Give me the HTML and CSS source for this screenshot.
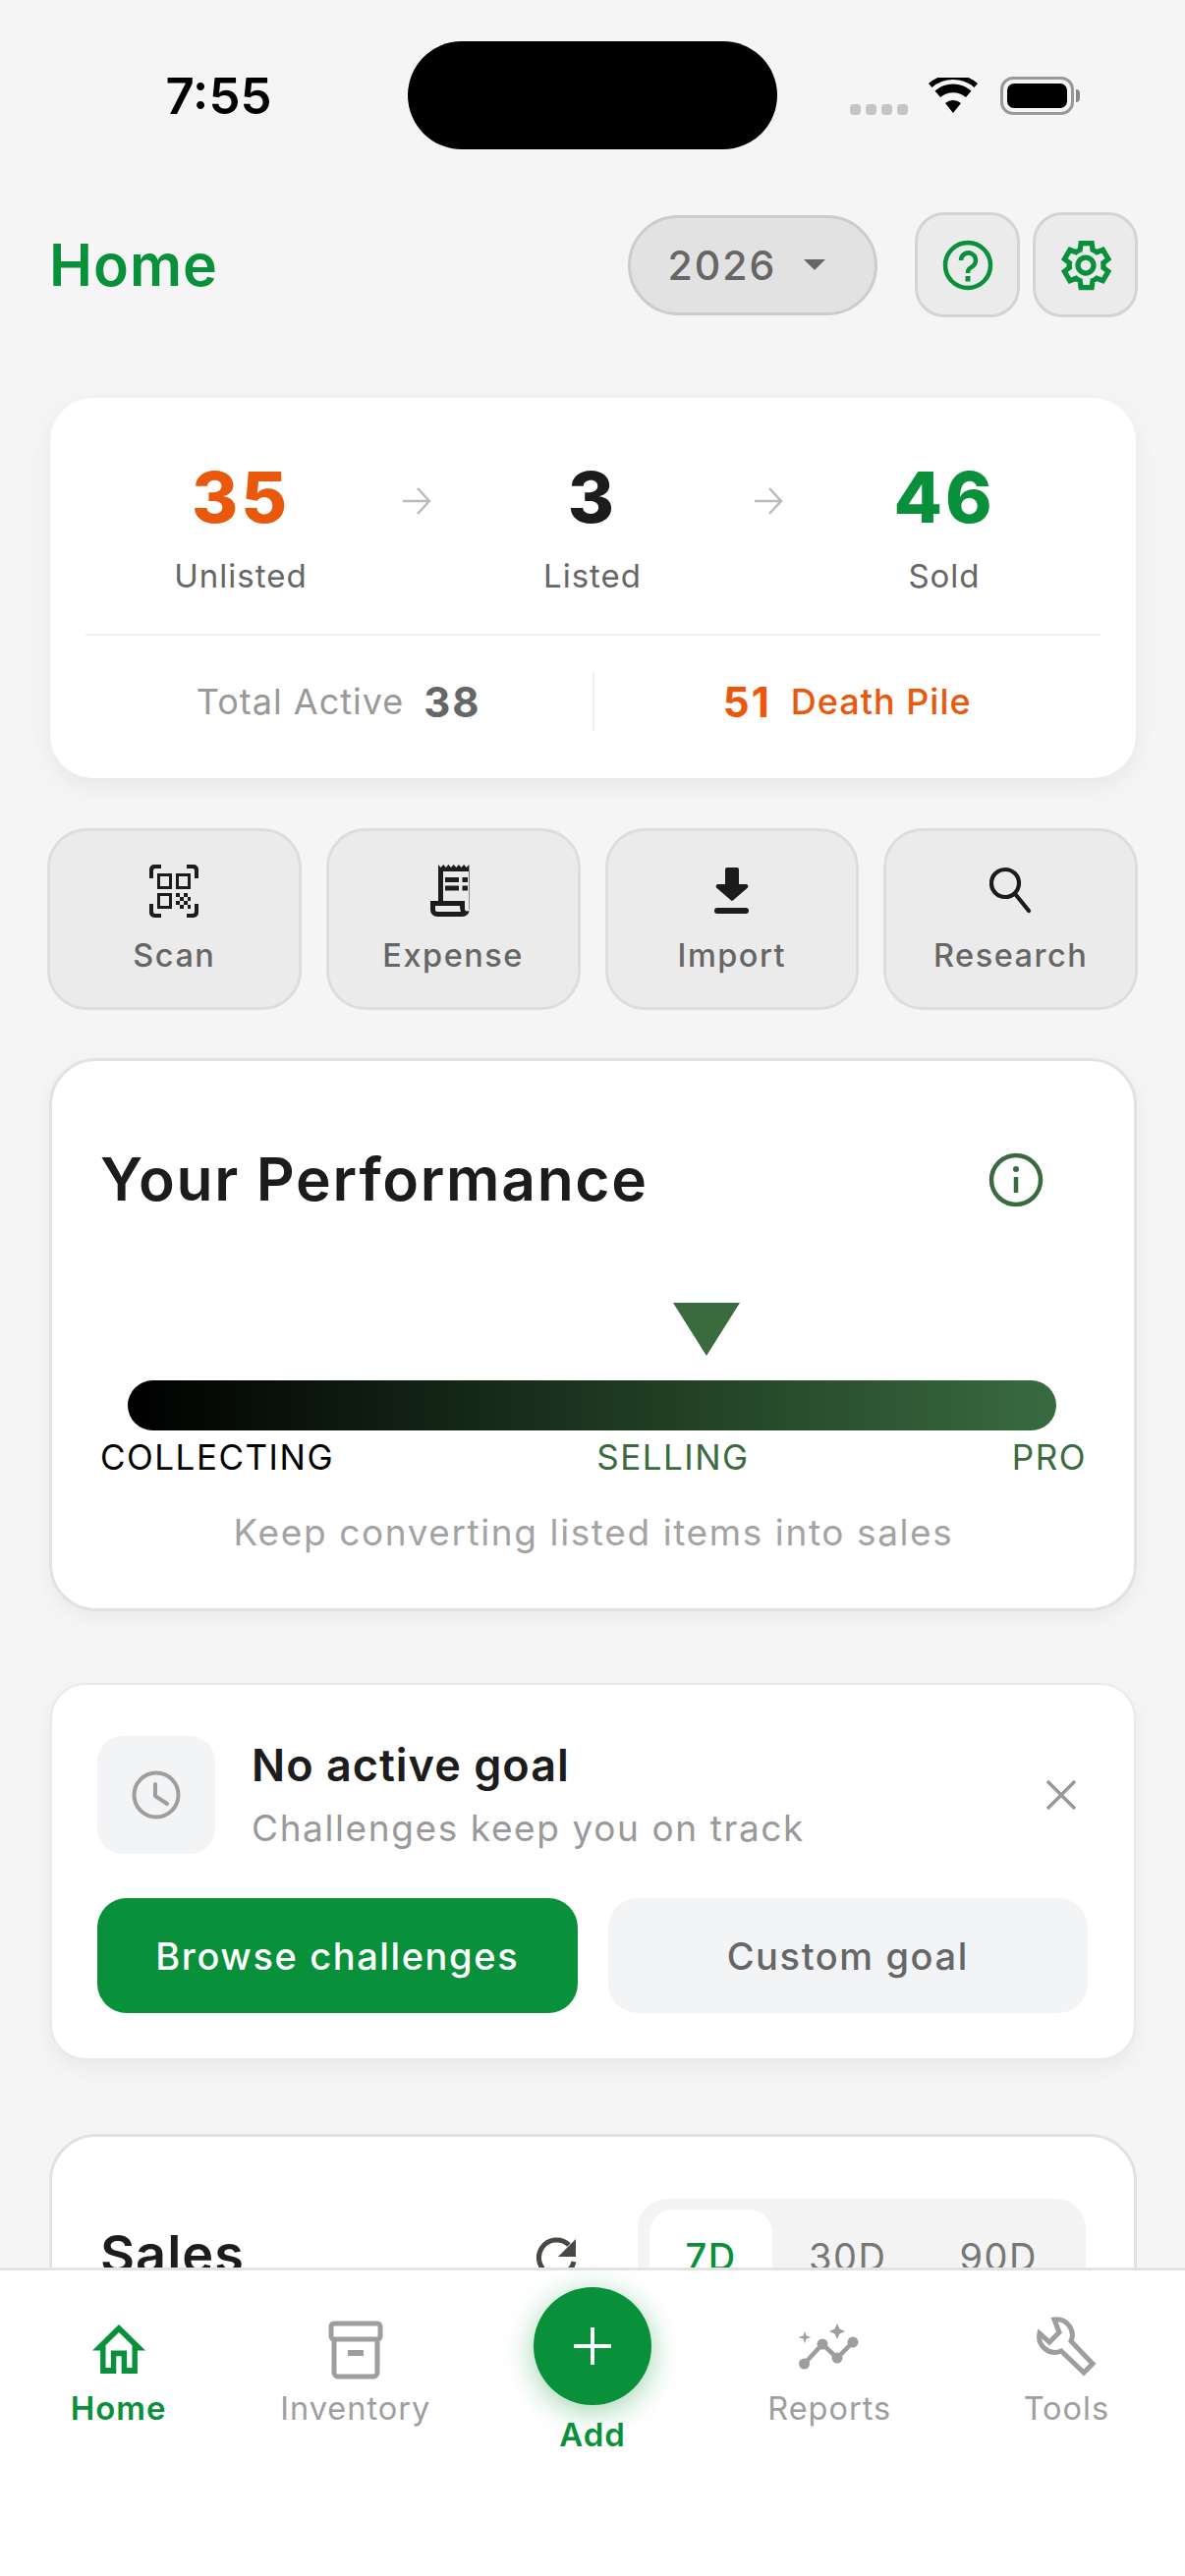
FILE: index.html
```html
<!DOCTYPE html>
<html lang="en">
<head>
    <meta charset="UTF-8">
    <meta name="viewport" content="width=device-width, initial-scale=1.0">
    <title>Home</title>
    <link rel="stylesheet" href="styles.css">
</head>
<body>
    <div class="app">
        <div class="content">
            <div class="status-bar">
                <div class="time">7:55</div>
                <div class="island"></div>
                <div class="status-icons">
                    <div class="signal"><span></span><span></span><span></span><span></span></div>
                    <svg class="wifi" viewBox="0 0 50 36"><path d="M25 36 17 26a12 12 0 0 1 16 0zM12 20 6.500 13.500a28 28 0 0 1 37 0L38 20a20 20 0 0 0-26 0zM3.500 10 0 6a38 38 0 0 1 50 0l-3.500 4a33 33 0 0 0-43 0z" fill="#000"/></svg>
                    <div class="battery"><div class="battery-fill"></div></div>
                    <div class="battery-cap"></div>
                </div>
            </div>

            <div class="header">
                <h1>Home</h1>
                <div class="year-pill">2026 <span class="caret"></span></div>
                <div class="square-btn">
                    <svg width="52" height="52" viewBox="0 0 52 52" fill="none" stroke="#09903a"><circle cx="26" cy="26" r="23" stroke-width="4.500"/><path d="M19 21a7.500 7.500 0 1 1 11.500 6.300c-3 1.900-4.500 3-4.500 6.700" stroke-width="4.500"/><rect x="23.500" y="37" width="5" height="5.500" fill="#09903a" stroke="none"/></svg>
                </div>
                <div class="square-btn">
                    <svg width="60" height="60" viewBox="0 0 24 24" fill="none" stroke="#09903a" stroke-width="2.100"><path d="M19.140 12.940c.04-.3.060-.61.060-.94 0-.32-.02-.64-.07-.94l2.030-1.580-2.200-3.800-2.500 1c-.5-.38-1.030-.7-1.620-.94L14.460 3h-4.400l-.38 2.740c-.59.24-1.130.57-1.620.94l-2.500-1-2.200 3.800 2.030 1.580c-.05.3-.09.63-.09.94s.02.64.07.94l-2.030 1.580 2.200 3.800 2.500-1c.5.38 1.030.7 1.620.94l.38 2.740h4.400l.38-2.740c.59-.24 1.130-.56 1.620-.94l2.500 1 2.200-3.800z"/><circle cx="12" cy="12" r="3.200"/></svg>
                </div>
            </div>

            <div class="stats-card">
                <div class="flow-row">
                    <div class="flow-item"><div class="flow-num orange">35</div><div class="flow-label">Unlisted</div></div>
                    <svg class="flow-arrow" viewBox="0 0 30 30" fill="none" stroke="#bbb" stroke-width="2.500"><path d="M1 15h27M16 2l12 13-12 13"/></svg>
                    <div class="flow-item"><div class="flow-num">3</div><div class="flow-label">Listed</div></div>
                    <svg class="flow-arrow" viewBox="0 0 30 30" fill="none" stroke="#bbb" stroke-width="2.500"><path d="M1 15h27M16 2l12 13-12 13"/></svg>
                    <div class="flow-item"><div class="flow-num green">46</div><div class="flow-label">Sold</div></div>
                </div>
                <div class="totals-row">
                    <div class="total"><span class="total-label">Total Active</span><span class="total-num">38</span></div>
                    <div class="total total-right"><span class="total-num orange">51</span><span class="total-label orange">Death Pile</span></div>
                </div>
            </div>

            <div class="actions">
                <div class="action">
                    <svg width="50" height="54" viewBox="0 0 50 54" fill="#1c1c1c"><path d="M0 14V5a5 5 0 0 1 5-5h7v4H6a2 2 0 0 0-2 2v8zM38 0h7a5 5 0 0 1 5 5v9h-4V6a2 2 0 0 0-2-2h-6zM0 40h4v8a2 2 0 0 0 2 2h6v4H5a5 5 0 0 1-5-5zM46 40h4v9a5 5 0 0 1-5 5h-7v-4h6a2 2 0 0 0 2-2z"/><path d="M8 9h15v16H8zM11 12v10h9V12zM27 9h15v16H27zM30 12v10h9V12zM8 29h15v16H8zM11 32v10h9V32z" fill-rule="evenodd"/><path d="M27 29h4v4h-4zM35 29h4v4h-4zM31 33h4v4h-4zM39 33h3v4h-3zM27 37h4v4h-4zM35 37h4v4h-4zM31 41h4v4h-4zM39 41h3v4h-3z"/></svg>
                    <span>Scan</span>
                </div>
                <div class="action">
                    <svg width="46" height="54" viewBox="0 0 46 54"><path d="M8 0l2.600 3 2.600-3 2.600 3 2.600-3 2.600 3 2.700-3 2.600 3 2.600-3 2.600 3 2.600-3 2.600 3 2.700-3 .2 46a7 7 0 0 1-7 7H7a7 7 0 0 1-7-7v-9h8zM13 7v30h22v8a2.500 2.500 0 0 0 5 0V7zM5 42v4a2 2 0 0 0 2 2h24a16 16 0 0 1-1-6z" fill="#1c1c1c" fill-rule="evenodd"/><path d="M15 13h14v5H15zM32.500 13H38v5h-5.500zM15 21.500h14v5H15zM32.500 21.500H38v5h-5.500z" fill="#1c1c1c"/></svg>
                    <span>Expense</span>
                </div>
                <div class="action">
                    <svg width="36" height="48" viewBox="0 0 36 48" fill="#1c1c1c"><path d="M11 2a2 2 0 0 1 2-2h10a2 2 0 0 1 2 2v15h7c2 0 3 2 2 3.500L19.500 33a2 2 0 0 1-3 0L2 20.500C1 19 2 17 4 17h7z"/><rect x="0" y="41" width="35" height="6" rx="3"/></svg>
                    <span>Import</span>
                </div>
                <div class="action">
                    <svg width="44" height="48" viewBox="0 0 44 48" fill="none" stroke="#1c1c1c" stroke-width="4.200"><circle cx="16" cy="16" r="14"/><path d="M27 28l13 16" stroke-linecap="round"/></svg>
                    <span>Research</span>
                </div>
            </div>

            <div class="perf-card">
                <div class="perf-head">
                    <h2>Your Performance</h2>
                    <svg width="56" height="56" viewBox="0 0 56 56" fill="none" stroke="#396b3f" stroke-width="4.500"><circle cx="28" cy="28" r="25"/><path d="M28 25v16"/><circle cx="28" cy="17" r="3" fill="#396b3f" stroke="none"/></svg>
                </div>
                <div class="marker"></div>
                <div class="level-bar"></div>
                <div class="level-labels">
                    <span class="level-black">COLLECTING</span>
                    <span>SELLING</span>
                    <span>PRO</span>
                </div>
                <div class="perf-hint">Keep converting listed items into sales</div>
            </div>

            <div class="goal-card">
                <div class="goal-top">
                    <div class="goal-icon">
                        <svg width="50" height="50" viewBox="0 0 50 50" fill="none" stroke="#9e9e9e" stroke-width="4"><circle cx="25" cy="25" r="22.500"/><path d="M24 14v12l12 8" stroke-linecap="round" stroke-linejoin="round"/></svg>
                    </div>
                    <div class="goal-text">
                        <div class="goal-title">No active goal</div>
                        <div class="goal-sub">Challenges keep you on track</div>
                    </div>
                    <svg class="goal-close" width="32" height="32" viewBox="0 0 32 32" stroke="#999" stroke-width="3.500"><path d="M2 2l28 28M30 2 2 30"/></svg>
                </div>
                <div class="goal-btns">
                    <div class="goal-btn primary">Browse challenges</div>
                    <div class="goal-btn">Custom goal</div>
                </div>
            </div>

            <div class="sales-card">
                <div class="sales-head">
                    <h2>Sales</h2>
                    <svg class="refresh" width="44" height="44" viewBox="0 0 44 44" fill="none"><path d="M34 8A18 18 0 1 0 39 25" stroke="#454a42" stroke-width="5"/><path d="M41 2v18H23z" fill="#454a42"/></svg>
                    <div class="range">
                        <div class="range-tab active">7D</div>
                        <div class="range-tab">30D</div>
                        <div class="range-tab">90D</div>
                    </div>
                </div>
            </div>
        </div>

        <div class="nav">
            <div class="nav-item active">
                <svg class="icon-home" width="54" height="50" viewBox="2 3 20 17" preserveAspectRatio="none" fill="#09903a"><path d="M12 5.690l5 4.500V18h-2v-6H9v6H7v-7.810l5-4.500M12 3L2 12h3v8h6v-6h2v6h6v-8h3L12 3z"/></svg>
                <span>Home</span>
            </div>
            <div class="nav-item">
                <svg class="icon-inventory" width="56" height="60" viewBox="0 0 56 60" fill="none" stroke="#9e9e9e" stroke-width="5"><rect x="3" y="3" width="50" height="16" rx="3"/><path d="M6 19v34a4 4 0 0 0 4 4h36a4 4 0 0 0 4-4V19"/><path d="M20 33h16" stroke-width="6"/></svg>
                <span>Inventory</span>
            </div>
            <div class="nav-item nav-add">
                <div class="fab"><svg width="38" height="38" viewBox="0 0 38 38" stroke="#fff" stroke-width="4"><path d="M19 0v38M0 19h38"/></svg></div>
                <span>Add</span>
            </div>
            <div class="nav-item">
                <svg class="icon-reports" width="62" height="52" viewBox="0 0 62 52" fill="#9e9e9e"><path d="M39 4l2.500 5.500L47 12l-5.500 2.500L39 20l-2.500-5.500L31 12l5.500-2.500zM6 11.500l1.500 5 5 1.500-5 1.500-1.500 5-1.500-5-5-1.500 5-1.500z"/><circle cx="5.500" cy="45" r="5.500"/><circle cx="24" cy="25" r="5.500"/><circle cx="39" cy="39" r="5.500"/><circle cx="55" cy="23" r="5.500"/><path d="M5.500 45 24 25l15 14 16-16" fill="none" stroke="#9e9e9e" stroke-width="4.500"/></svg>
                <span>Reports</span>
            </div>
            <div class="nav-item">
                <svg class="icon-tools" width="62" height="62" viewBox="0 0 62 62" fill="none" stroke="#9e9e9e" stroke-width="5"><path d="M19 3a16 16 0 0 1 17 22L58 48l-9 9-23-22A16 16 0 0 1 4 17l10 9 10-10z"/></svg>
                <span>Tools</span>
            </div>
        </div>
    </div>
</body>
</html>
```

FILE: styles.css
```css
* {
    box-sizing: border-box;
}
body {
    margin: 0;
    font-family: Inter, "Noto Sans", sans-serif;
    background-color: #f5f5f5;
    color: #1c1c1c;
}
h1, h2 {
    margin: 0;
}
.app {
    height: 2622px;
    display: flex;
    flex-direction: column;
    overflow: hidden;
}
.content {
    flex: 1;
    min-height: 0;
    overflow: hidden;
    padding: 0 48px 0 49px;
}
.orange {
    color: #ea580c;
}
.green {
    color: #09903a;
}

/* status bar */
.status-bar {
    height: 216px;
    margin-left: -49px;
    margin-right: -48px;
    padding-top: 42px;
    display: grid;
    grid-template-columns: 415px 376px 1fr;
    align-items: start;
}
.time {
    height: 110px;
    line-height: 112px;
    text-align: center;
    padding-left: 30px;
    font-size: 51px;
    font-weight: 600;
    color: #000;
}
.island {
    height: 110px;
    background-color: #000;
    border-radius: 55px;
}
.status-icons {
    height: 110px;
    padding-left: 74px;
    display: flex;
    align-items: center;
}
.signal {
    display: flex;
    gap: 5px;
    margin-top: 28px;
}
.signal span {
    width: 11px;
    height: 11px;
    border-radius: 4px;
    background-color: #c4c4c4;
}
.wifi {
    width: 50px;
    height: 36px;
    margin-left: 21px;
}
.battery {
    width: 75px;
    height: 39px;
    margin-left: 23px;
    padding: 4px;
    border: 3px solid #999;
    border-radius: 13px;
}
.battery-fill {
    height: 100%;
    background-color: #000;
    border-radius: 7px;
}
.battery-cap {
    width: 4px;
    height: 13px;
    margin-left: 2px;
    background-color: #888;
    border-radius: 0 4px 4px 0;
}

/* header */
.header {
    height: 107px;
    display: flex;
    align-items: center;
}
.header h1 {
    flex: 1;
    margin-left: 1px;
    font-size: 59px;
    font-weight: 600;
    letter-spacing: 1px;
    color: #09903a;
}
.year-pill {
    width: 254px;
    height: 102px;
    margin-right: 25px;
    padding-right: 12px;
    display: flex;
    align-items: center;
    justify-content: center;
    gap: 28px;
    font-size: 41px;
    font-weight: 500;
    letter-spacing: 2px;
    color: #666;
    background-color: #e2e2e2;
    border: 3px solid #ccc;
    border-radius: 51px;
}
.caret {
    width: 0;
    height: 0;
    border-left: 11px solid transparent;
    border-right: 11px solid transparent;
    border-top: 11px solid #666;
}
.square-btn {
    width: 107px;
    height: 107px;
    margin-left: 13px;
    display: flex;
    align-items: center;
    justify-content: center;
    background-color: #ebebeb;
    border: 3px solid #d4d4d4;
    border-radius: 30px;
}

/* stats */
.stats-card {
    height: 387px;
    margin: 82px 2px 0 2px;
    padding: 0 36px;
    background-color: #fff;
    border-radius: 44px;
    box-shadow: 0 8px 24px rgba(0, 0, 0, 0.06);
}
.flow-row {
    height: 242px;
    padding-right: 1px;
    display: flex;
    justify-content: center;
    align-items: flex-start;
    border-bottom: 2px solid #efefef;
}
.flow-item {
    width: 300px;
    padding-top: 60px;
    text-align: center;
}
.flow-num {
    height: 82px;
    line-height: 82px;
    font-size: 72px;
    font-weight: 800;
    letter-spacing: 3px;
}
.flow-label {
    margin-top: 19px;
    font-size: 33px;
    letter-spacing: 1px;
    color: #666;
}
.flow-arrow {
    width: 30px;
    height: 30px;
    margin: 90px 14px 0;
}
.totals-row {
    display: flex;
    padding-top: 37px;
}
.total {
    flex: 1;
    height: 60px;
    display: flex;
    align-items: center;
    justify-content: center;
    gap: 20px;
}
.total-right {
    border-left: 2px solid #efefef;
}
.total-label {
    font-size: 36px;
    letter-spacing: 1px;
    color: #999;
}
.total-num {
    font-size: 42px;
    font-weight: 700;
    letter-spacing: 2px;
    color: #666;
}
.total-label.orange {
    color: #ea580c;
    font-weight: 500;
}
.total-num.orange {
    color: #ea580c;
}

/* quick actions */
.actions {
    height: 185px;
    margin: 51px 0 0 -1px;
    display: grid;
    grid-template-columns: repeat(4, 1fr);
    gap: 25px;
}
.action {
    display: flex;
    flex-direction: column;
    align-items: center;
    padding-top: 34px;
    background-color: #ebebeb;
    border: 3px solid #ddd;
    border-radius: 40px;
    font-size: 32.500px;
    font-weight: 500;
    letter-spacing: 1.500px;
    color: #666;
}
.action svg {
    height: 54px;
    margin-bottom: 19px;
}

/* performance */
.perf-card {
    height: 563px;
    margin: 49px 1px 0 1px;
    padding: 0 48px 0 49px;
    background-color: #fff;
    border: 3px solid #e2e2e2;
    border-radius: 48px;
    box-shadow: 0 6px 20px rgba(0, 0, 0, 0.05);
}
.perf-head {
    display: flex;
    align-items: center;
    justify-content: space-between;
    padding: 88px 44px 0 0;
}
.perf-head h2 {
    font-size: 60.500px;
    font-weight: 600;
    letter-spacing: 1.700px;
    line-height: 64px;
}
.perf-head svg {
    margin-top: 2px;
}
.marker {
    width: 68px;
    height: 54px;
    margin: 94px 0 0 583px;
    background-color: #396b3f;
    clip-path: polygon(0 0, 100% 0, 50% 100%);
}
.level-bar {
    height: 51px;
    margin: 25px 31px 0 28px;
    border-radius: 26px;
    background: linear-gradient(90deg, #000, #396b3f);
}
.level-labels {
    margin-top: 7px;
    display: flex;
    justify-content: space-between;
    font-size: 35px;
    line-height: 40px;
    letter-spacing: 1.500px;
    color: #396b3f;
}
.level-black {
    color: #000;
}
.perf-hint {
    margin-top: 34px;
    text-align: center;
    font-size: 37px;
    letter-spacing: 1.600px;
    color: #a3a3a3;
}

/* goal */
.goal-card {
    height: 384px;
    margin: 73px 2px 0 2px;
    padding: 52px 47px 0 46px;
    background-color: #fff;
    border: 2px solid #e9e9ee;
    border-radius: 36px;
    box-shadow: 0 8px 20px rgba(0, 0, 0, 0.05);
}
.goal-top {
    display: flex;
    align-items: center;
}
.goal-icon {
    width: 120px;
    height: 120px;
    display: flex;
    align-items: center;
    justify-content: center;
    background-color: #f3f4f6;
    border-radius: 26px;
}
.goal-text {
    flex: 1;
    margin-left: 37px;
}
.goal-title {
    font-size: 45px;
    line-height: 52px;
    font-weight: 600;
    letter-spacing: 1px;
}
.goal-sub {
    margin-top: 15px;
    font-size: 37px;
    letter-spacing: 1.600px;
    color: #999;
}
.goal-close {
    margin-right: 11px;
}
.goal-btns {
    margin-top: 45px;
    display: grid;
    grid-template-columns: 1fr 1fr;
    gap: 31px;
}
.goal-btn {
    height: 117px;
    display: flex;
    align-items: center;
    justify-content: center;
    font-size: 38px;
    font-weight: 500;
    letter-spacing: 1.600px;
    color: #666;
    background-color: #f3f4f6;
    border-radius: 30px;
}
.goal-btn.primary {
    color: #fff;
    background-color: #09903a;
}

/* sales */
.sales-card {
    height: 400px;
    margin: 75px 1px 0 1px;
    padding: 63px 49px 0 49px;
    background-color: #fff;
    border: 3px solid #e2e2e2;
    border-radius: 48px;
}
.sales-head {
    display: flex;
    align-items: flex-start;
}
.sales-head h2 {
    flex: 1;
    margin-top: 24px;
    font-size: 54px;
    font-weight: 600;
    letter-spacing: 1px;
}
.refresh {
    margin: 39px 60px 0 0;
}
.range {
    width: 456px;
    padding: 11px 12px 12px;
    display: flex;
    background-color: #f4f4f4;
    border-radius: 30px;
}
.range-tab {
    flex: 1;
    height: 100px;
    padding-top: 25px;
    text-align: center;
    font-size: 38px;
    line-height: 46px;
    letter-spacing: 1.500px;
    color: #777;
    border-radius: 24px;
}
.range-tab.active {
    flex: 0 0 125px;
    font-weight: 500;
    color: #09903a;
    background-color: #fff;
}

/* bottom nav */
.nav {
    height: 314px;
    flex-shrink: 0;
    display: grid;
    grid-template-columns: repeat(5, 1fr);
    background-color: #fff;
    border-top: 3px solid #e3e3e3;
}
.nav-item {
    height: 160px;
    display: flex;
    flex-direction: column;
    align-items: center;
    justify-content: flex-end;
    font-size: 32.500px;
    letter-spacing: 1px;
    color: #9e9e9e;
}
.nav-item.active {
    font-size: 33px;
    font-weight: 600;
    color: #09903a;
}
.icon-home {
    margin-bottom: 15px;
}
.icon-inventory {
    margin-bottom: 10px;
}
.icon-reports {
    margin-bottom: 19px;
}
.icon-tools {
    margin-bottom: 12px;
}
.nav-add {
    height: 187px;
    font-size: 33px;
    font-weight: 600;
    color: #09903a;
}
.fab {
    width: 120px;
    height: 120px;
    margin-bottom: 10px;
    display: flex;
    align-items: center;
    justify-content: center;
    background-color: #09903a;
    border-radius: 50%;
    box-shadow: 0 6px 30px rgba(9, 144, 58, 0.4);
}
```
